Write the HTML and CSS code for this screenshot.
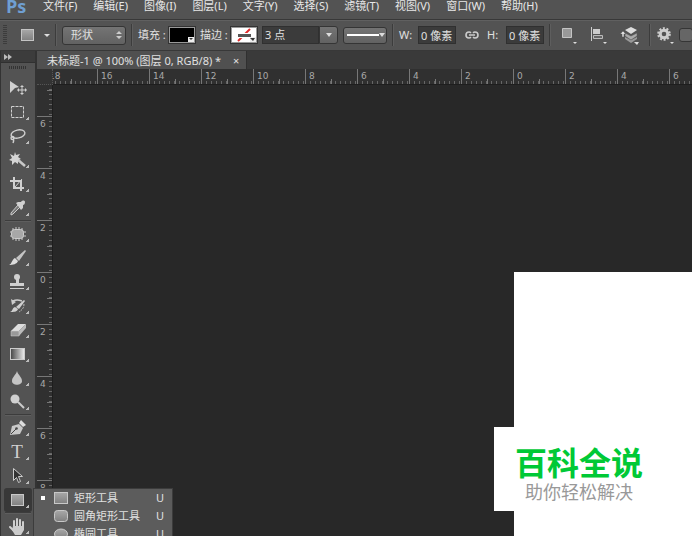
FILE: index.html
```html
<!DOCTYPE html>
<html lang="zh-CN">
<head>
    <meta charset="UTF-8">
    <meta name="viewport" content="width=device-width, initial-scale=1.0">
    <title>未标题-1</title>
    <link rel="stylesheet" href="styles.css">
</head>
<body>

<header class="menubar">
    <span class="logo">Ps</span>
    <nav>
        <a href="#">文件(F)</a>
        <a href="#">编辑(E)</a>
        <a href="#">图像(I)</a>
        <a href="#">图层(L)</a>
        <a href="#">文字(Y)</a>
        <a href="#">选择(S)</a>
        <a href="#">滤镜(T)</a>
        <a href="#">视图(V)</a>
        <a href="#">窗口(W)</a>
        <a href="#">帮助(H)</a>
    </nav>
</header>

<div class="options">
    <span class="grip"></span>
    <button class="preset" aria-label="工具预设">
        <svg width="30" height="16" viewBox="0 0 30 16">
            <rect x="1.500" y="2.500" width="12" height="11" fill="url(#metal)" stroke="#c4c4c4"/>
            <path d="M24 7h6l-3 3z" fill="#ddd"/>
        </svg>
    </button>
    <span class="divider"></span>
    <div class="mode">
        <select aria-label="模式"><option>形状</option></select>
        <svg width="6" height="10" viewBox="0 0 6 10"><path d="M0 4l3-3 3 3zM0 6l3 3 3-3z" fill="#ccc"/></svg>
    </div>
    <span class="divider"></span>
    <label for="fill">填充 :</label>
    <button id="fill" class="swatch black">
        <svg width="24" height="14" viewBox="0 0 24 14"><path d="M18 9h6v5h-6z" fill="#eee"/><path d="M19 10h4l-2 2z" fill="#333"/></svg>
    </button>
    <label for="stroke">描边 :</label>
    <button id="stroke" class="swatch white">
        <svg width="24" height="14" viewBox="0 0 24 14">
            <path d="M6 13L18 1" stroke="#e22b2b" stroke-width="2"/>
            <path d="M4 5h16v5H4z" fill="#fff"/>
            <path d="M6 6h13v3H6z" fill="#555"/>
            <path d="M18 9h6v5h-6z" fill="#eee"/><path d="M18 10h5l-2 3z" fill="#333"/>
        </svg>
    </button>
    <div class="combo">
        <input type="text" value="3 点" aria-label="描边宽度">
        <button aria-label="选择描边宽度"><svg width="6" height="4" viewBox="0 0 6 4"><path d="M0 0h6l-3 4z" fill="#ddd"/></svg></button>
    </div>
    <button class="line-style" aria-label="描边类型">
        <svg width="40" height="8" viewBox="0 0 40 8"><path d="M2 3h32v2H2z" fill="#fff"/><path d="M34 2h6l-3 4z" fill="#ddd"/></svg>
    </button>
    <span class="divider"></span>
    <label class="dim" for="width">W:</label>
    <input class="size" id="width" type="text" value="0 像素">
    <button class="link" aria-label="链接宽高">
        <svg width="14" height="8" viewBox="0 0 14 8" fill="none" stroke="#ccc" stroke-width="1.600">
            <path d="M6 1.800A3 3 0 0 0 4 1C2.300 1 1 2.300 1 4s1.300 3 3 3a3 3 0 0 0 2-.8M8 1.800A3 3 0 0 1 10 1c1.700 0 3 1.300 3 3s-1.300 3-3 3a3 3 0 0 1-2-.8M4 4h6"/>
        </svg>
    </button>
    <label class="dim" for="height">H:</label>
    <input class="size" id="height" type="text" value="0 像素">
    <span class="divider"></span>
    <div class="actions">
        <button aria-label="路径操作">
            <svg width="18" height="20" viewBox="0 0 18 20"><path d="M3.500 3.500h9v9h-9z" fill="#999" stroke="#c4c4c4"/><path d="M14 17h4l-2 2z" fill="#ddd"/></svg>
        </button>
        <button aria-label="路径对齐">
            <svg width="18" height="20" viewBox="0 0 18 20"><path d="M2.500 2v14" stroke="#ccc"/><path d="M4 4h7v5H4z" fill="#ccc"/><path d="M4.500 10.500h9v3h-9z" fill="#666" stroke="#bbb"/><path d="M14 17h4l-2 2z" fill="#ddd"/></svg>
        </button>
        <button aria-label="路径排列">
            <svg width="20" height="20" viewBox="0 0 20 20">
                <path d="M6 12l6 3 6-3v2l-6 4-6-4z" fill="#999"/>
                <path d="M6 8l6 3 6-3v3l-6 4-6-4z" fill="#aaa" stroke="#555" stroke-width=".5"/>
                <path d="M6 5l6-3 6 3-6 4z" fill="#ddd"/>
                <path d="M1 9l3-3 3 3H5v3H3V9z" fill="#ddd" stroke="#4c4c4c" stroke-width=".5"/>
                <path d="M15 17h5l-2 3z" fill="#ddd"/>
            </svg>
        </button>
    </div>
    <span class="divider"></span>
    <button class="gear" aria-label="设置">
        <svg width="18" height="20" viewBox="0 0 18 20">
            <circle cx="8" cy="9" r="5.800" fill="none" stroke="#ccc" stroke-width="2" stroke-dasharray="2 1.640"/>
            <circle cx="8" cy="9" r="3.800" fill="none" stroke="#ccc" stroke-width="3"/>
            <path d="M14 17h4l-2 2z" fill="#ddd"/>
        </svg>
    </button>
    <input class="align-edges" type="checkbox" aria-label="对齐边缘">
</div>

<main>
    <aside class="toolbox">
        <button class="collapse" aria-label="展开面板"><svg width="8" height="6" viewBox="0 0 8 6"><path d="M0 0l4 3-4 3zM4 0l4 3-4 3z" fill="#bbb"/></svg></button>
        <span class="handle"></span>
        <button class="tool" aria-label="移动工具">
            <svg viewBox="0 0 28 24"><path d="M6 5l9 6-4 1-5 5z" fill="#d0d0d0"/><path d="M18 10v8M14 14h8" stroke="#d0d0d0"/><path d="M16 11l2-2 2 2zM16 17l2 2 2-2zM15 12l-2 2 2 2zM21 12l2 2-2 2z" fill="#d0d0d0"/></svg>
        </button>
        <button class="tool more" aria-label="矩形选框工具">
            <svg viewBox="0 0 28 24"><path d="M7.500 6.500h12v11h-12z" fill="none" stroke="#d0d0d0" stroke-dasharray="3 1"/></svg>
        </button>
        <button class="tool more" aria-label="套索工具">
            <svg viewBox="0 0 28 24" fill="none" stroke="#d0d0d0" stroke-width="1.400"><ellipse cx="14" cy="10" rx="7" ry="4" transform="rotate(-12 14 10)"/><circle cx="8.500" cy="14" r="1.500"/><path d="M9 15c1 1 1 2 0 4"/></svg>
        </button>
        <button class="tool more" aria-label="魔棒工具">
            <svg viewBox="0 0 28 24"><path d="M13 11l8 7" stroke="#c8c8c8" stroke-width="2.500"/><path d="M11 4l1 3 4-1-2 3 3 2-3 1 0 4-3-2-3 3 0-4-3-1 3-2-2-4 4 2z" fill="#d4d4d4"/></svg>
        </button>
        <button class="tool more" aria-label="裁剪工具">
            <svg viewBox="0 0 28 24" fill="none" stroke="#d0d0d0" stroke-width="2"><path d="M10 5v11h10M6 9h11v10"/><path d="M11 15l7-8" stroke-width="1"/></svg>
        </button>
        <button class="tool more" aria-label="吸管工具">
            <svg viewBox="0 0 28 24"><path d="M14 9l2 2-7 7-2 1 0-2z" fill="#777" stroke="#ccc"/><path d="M12 7l2-1 3 0c1-2 4-2 4 0 0 2-1 3-2 3l0 3-2 2z" fill="#d0d0d0"/></svg>
        </button>
        <span class="rule"></span>
        <button class="tool more" aria-label="修补工具">
            <svg viewBox="0 0 28 24"><path d="M9 6v12M12 5v14M15 5v14M18 6v12M6 10h16M6 14h16" stroke="#ccc"/><rect x="7.500" y="7.500" width="12" height="9" rx="3" fill="#a8a8a8" stroke="#ccc"/></svg>
        </button>
        <button class="tool more" aria-label="画笔工具">
            <svg viewBox="0 0 28 24"><path d="M21 4l1 1-7 10-3-3z" fill="#c4c4c4"/><path d="M11 12l3 3c-1 3-5 4-9 4 3-1 3-6 6-7z" fill="#ddd"/></svg>
        </button>
        <button class="tool more" aria-label="仿制图章工具">
            <svg viewBox="0 0 28 24"><circle cx="13" cy="7" r="3" fill="#d0d0d0"/><path d="M12 9h3v4h5v3H6v-3h6zM6 18h14v1H6z" fill="#d0d0d0"/></svg>
        </button>
        <button class="tool more" aria-label="历史记录画笔工具">
            <svg viewBox="0 0 28 24"><path d="M20 6l1 1-6 8-3-2zM11 13l3 2c-1 3-4 3-8 3 3-1 2-4 5-5z" fill="#d0d0d0"/><path d="M9 7c4-2 6-1 9 0" fill="none" stroke="#ccc" stroke-width="1.500"/><path d="M7 5l1 6 4-3z" fill="#ccc"/><path d="M20 10c0 4-2 6-5 8" fill="none" stroke="#bbb" stroke-dasharray="2 1"/></svg>
        </button>
        <button class="tool more" aria-label="橡皮擦工具">
            <svg viewBox="0 0 28 24"><path d="M14 6h8l-7 7H7z" fill="#ddd"/><path d="M7 13h8v5H7z" fill="#999" stroke="#ccc" stroke-width=".5"/><path d="M15 13l7-7v4l-7 8z" fill="#bbb"/></svg>
        </button>
        <button class="tool more" aria-label="渐变工具">
            <svg viewBox="0 0 28 24"><rect x="6.500" y="6.500" width="14" height="11" fill="url(#fade)" stroke="#ccc"/></svg>
        </button>
        <button class="tool more" aria-label="模糊工具">
            <svg viewBox="0 0 28 24"><path d="M13 5c1 4 5 6 5 10 0 5-10 5-10 0 0-4 4-6 5-10z" fill="#c4c4c4"/></svg>
        </button>
        <button class="tool more" aria-label="减淡工具">
            <svg viewBox="0 0 28 24"><circle cx="11" cy="9" r="4.500" fill="#d0d0d0"/><path d="M14 12l6 6" stroke="#ccc" stroke-width="2"/></svg>
        </button>
        <span class="rule"></span>
        <button class="tool more" aria-label="钢笔工具">
            <svg viewBox="0 0 28 24"><path d="M6 19l2-9 7-2 4 4-3 6z" fill="#c8c8c8"/><path d="M15 7l2-3 5 5-3 2z" fill="#ddd"/><path d="M7 18l5-5" stroke="#444"/><circle cx="12.500" cy="12.500" r="1.300" fill="#444"/></svg>
        </button>
        <button class="tool more type" aria-label="文字工具">T</button>
        <button class="tool more" aria-label="路径选择工具">
            <svg viewBox="0 0 28 24"><path d="M9.500 4.500v12l3-3 2 5 2-1-2-5h4z" fill="#333" stroke="#ccc"/></svg>
        </button>
        <button class="tool more active" aria-label="矩形工具">
            <svg viewBox="0 0 28 24"><rect x="7.500" y="6.500" width="12" height="11" fill="url(#metal)" stroke="#c8c8c8"/></svg>
        </button>
        <span class="rule"></span>
        <button class="tool more" aria-label="抓手工具">
            <svg viewBox="0 0 28 24"><path d="M10 14V7M13 13V5M16 13V6M19 14V8M10 17l-4-4" stroke="#d0d0d0" stroke-width="2" stroke-linecap="round"/><path d="M9 12h11v4l-3 5h-6l-3-5z" fill="#ccc"/></svg>
        </button>
    </aside>

    <section class="document">
        <div class="tabs">
            <div class="tab"><span>未标题-1 @ 100% (图层 0, RGB/8) *</span><button aria-label="关闭">×</button></div>
        </div>
        <div class="ruler-corner"></div>
        <div class="ruler top">
            <span>18</span><span>16</span><span>14</span><span>12</span><span>10</span><span>8</span><span>6</span><span>4</span><span>2</span><span>0</span><span>2</span><span>4</span><span>6</span>
        </div>
        <div class="ruler side">
            <span>8</span><span>6</span><span>4</span><span>2</span><span>0</span><span>2</span><span>4</span><span>6</span><span>8</span>
        </div>
        <div class="canvas">
            <div class="page"></div>
            <div class="watermark">
                <strong>百科全说</strong>
                <span>助你轻松解决</span>
            </div>
        </div>
    </section>

    <div class="flyout">
        <button class="current">
            <svg width="14" height="12" viewBox="0 0 14 12"><rect x=".5" y=".5" width="13" height="11" fill="url(#metal)" stroke="#c8c8c8"/></svg>
            <span>矩形工具</span><kbd>U</kbd>
        </button>
        <button>
            <svg width="14" height="12" viewBox="0 0 14 12"><rect x=".5" y=".5" width="13" height="11" rx="3" fill="url(#metal)" stroke="#c8c8c8"/></svg>
            <span>圆角矩形工具</span><kbd>U</kbd>
        </button>
        <button>
            <svg width="14" height="12" viewBox="0 0 14 12"><ellipse cx="7" cy="6" rx="6.500" ry="5" fill="url(#metal)" stroke="#c8c8c8"/></svg>
            <span>椭圆工具</span><kbd>U</kbd>
        </button>
    </div>
</main>

<!-- shared gradients for the icons -->
<svg class="defs" width="0" height="0">
    <linearGradient id="metal" x2="0" y2="1"><stop stop-color="#a8a8a8"/><stop offset="1" stop-color="#808080"/></linearGradient>
    <linearGradient id="fade"><stop stop-color="#444"/><stop offset="1" stop-color="#eee"/></linearGradient>
</svg>

</body>
</html>
```
FILE: styles.css
```css
* {
    box-sizing: border-box;
}

body {
    display: flex;
    flex-direction: column;
    height: 100vh;
    margin: 0;
    overflow: hidden;
    background-color: #282828;
    color: #e0e0e0;
    font: 11px/14px "Noto Sans", "Noto Sans CJK SC", sans-serif;
}

button, input, select {
    margin: 0;
    padding: 0;
    border: none;
    background: none;
    color: inherit;
    font: inherit;
}

button {
    display: flex;
    align-items: center;
    justify-content: center;
}

svg {
    display: block;
    flex: none;
}

.defs {
    position: absolute;
}

/* menu bar */
.menubar {
    display: flex;
    align-items: flex-end;
    flex: none;
    height: 19px;
    padding: 0 6px 6px;
    background-color: #535353;
}

.logo {
    width: 37px;
    color: #6f9fd2;
    font: bold 18px/14px "Open Sans", sans-serif;
}

.menubar nav {
    display: flex;
    gap: 16px;
    white-space: nowrap;
}

.menubar a {
    color: #e8e8e8;
    text-decoration: none;
}

/* options bar */
.options {
    display: flex;
    align-items: center;
    gap: 5px;
    flex: none;
    height: 32px;
    padding-left: 3px;
    overflow: hidden;
    border-top: 1px solid #383838;
    border-bottom: 1px solid #383838;
    background-color: #535353;
    box-shadow: inset 0 1px #606060;
    white-space: nowrap;
}

.options > * {
    flex: none;
}

.grip {
    width: 4px;
    height: 20px;
    background: repeating-linear-gradient(#3c3c3c 0 1px, #535353 1px 2px);
}

.preset {
    justify-content: flex-end;
    width: 38px;
}

.divider {
    width: 2px;
    height: 22px;
    border-left: 1px solid #3c3c3c;
    border-right: 1px solid #5e5e5e;
}

.mode {
    display: grid;
    align-items: center;
    width: 64px;
}

.mode > * {
    grid-area: 1 / 1;
}

.mode svg {
    justify-self: end;
    margin-right: 4px;
    pointer-events: none;
}

.mode select {
    width: 100%;
    height: 19px;
    padding-left: 8px;
    appearance: none;
}

.mode select, .line-style, .combo button {
    border: 1px solid #353535;
    border-radius: 3px;
    background: linear-gradient(#747474, #626262);
}

.options label {
    width: 26px;
}

.swatch {
    width: 26px;
    height: 16px;
    border: 1px solid #999;
    outline: 1px solid #333;
}

.black {
    background-color: #000;
}

.white {
    background-color: #fff;
}

.combo {
    display: flex;
    width: 76px;
    height: 18px;
}

.combo input, .size {
    border: 1px solid #303030;
    background-color: #3b3b3b;
}

.combo input {
    flex: 1;
    min-width: 0;
    padding-left: 2px;
}

.combo button {
    width: 19px;
    border-radius: 0 3px 3px 0;
}

.line-style {
    width: 44px;
    height: 17px;
}

.options .dim {
    width: 14px;
}

.size {
    width: 38px;
    height: 18px;
    padding-left: 2px;
}

.link {
    width: 21px;
}

.actions {
    display: flex;
    gap: 12px;
    width: 88px;
    padding-left: 3px;
}

.gear {
    width: 18px;
}

.align-edges {
    width: 14px;
    height: 14px;
    appearance: none;
    border: 1px solid #353535;
    border-radius: 3px;
    background-color: #666;
}

/* work area */
main {
    display: flex;
    flex: 1;
    min-height: 0;
    position: relative;
}

.toolbox {
    display: flex;
    flex-direction: column;
    align-items: center;
    flex: none;
    width: 37px;
    border: solid #333;
    border-width: 0 2px 0 1px;
    overflow: hidden;
    background-color: #535353;
}

.toolbox > * {
    flex: none;
}

.collapse {
    width: 100%;
    height: 12px;
    padding-left: 3px;
    justify-content: flex-start;
    border-bottom: 1px solid #303030;
    background-color: #3c3c3c;
}

.handle {
    width: 18px;
    height: 3px;
    margin: 3px 0 7px;
    background: repeating-linear-gradient(90deg, #333 0 1px, #535353 1px 2px);
}

.tool {
    position: relative;
    width: 28px;
    height: 24px;
}

.tool svg {
    width: 28px;
    height: 24px;
}

.more::after {
    content: "";
    position: absolute;
    right: 3px;
    bottom: 4px;
    width: 3px;
    height: 3px;
    background: linear-gradient(135deg, transparent 40%, #bbb 40%);
}

.type {
    padding-right: 2px;
    color: #d0d0d0;
    font: 19px/24px "Liberation Serif", serif;
}

.active {
    border-radius: 3px;
    background-color: #383838;
}

.rule {
    width: 26px;
    height: 2px;
    border-top: 1px solid #3c3c3c;
    border-bottom: 1px solid #5e5e5e;
}

/* document window */
.document {
    display: grid;
    grid-template: 18px 16px 1fr / 16px 1fr;
    flex: 1;
    min-width: 0;
}

.tabs {
    grid-column: 1 / 3;
    display: flex;
    background-color: #3a3a3a;
}

.tab {
    display: flex;
    align-items: center;
    gap: 10px;
    padding: 2px 5px 0 10px;
    border-right: 1px solid #303030;
    background-color: #505050;
    white-space: nowrap;
}

.tab button {
    width: 10px;
}

.ruler-corner {
    border: dotted #555;
    border-width: 0 1px 1px 0;
    background-color: #333;
}

.ruler {
    display: flex;
    min-width: 0;
    min-height: 0;
    overflow: hidden;
    background-color: #303030;
    color: #a8a8a8;
    font: 9px/10px "DejaVu Sans", sans-serif;
}

.ruler span {
    flex: none;
}

/* short ticks, half ticks, then the full tick of each 52px step */
.top {
    border-bottom: 1px solid #1e1e1e;
}

.top span {
    width: 52px;
    height: 15px;
    padding: 2px 0 0 3px;
    border-left: 1px solid #777;
    background:
        linear-gradient(90deg, #777 1px, transparent 1px) 25px 100% / 26px 5px repeat-x,
        linear-gradient(90deg, #666 1px, transparent 1px) 4px 100% / 5px 3px repeat-x;
}

.top span:first-child {
    margin-left: -8px;
}

.side {
    flex-direction: column;
    border-right: 1px solid #1e1e1e;
}

.side span {
    width: 15px;
    height: 52px;
    padding: 2px 0 0 3px;
    border-top: 1px solid #777;
    background:
        linear-gradient(#777 1px, transparent 1px) 100% 25px / 5px 26px repeat-y,
        linear-gradient(#666 1px, transparent 1px) 100% 4px / 3px 5px repeat-y;
}

.side span:first-child {
    margin-top: -21px;
}

.canvas {
    position: relative;
    overflow: hidden;
    background-color: #282828;
}

.page {
    position: absolute;
    top: 187px;
    right: 0;
    bottom: 0;
    left: 461px;
    background-color: #fff;
}

.watermark {
    position: absolute;
    top: 342px;
    left: 441px;
    display: flex;
    flex-direction: column;
    align-items: center;
    width: 170px;
    height: 84px;
    padding-top: 16px;
    background-color: #fff;
    color: #999;
    font: 18px/24px "Noto Sans CJK SC", sans-serif;
}

.watermark strong {
    color: #00c936;
    font-size: 32px;
    line-height: 36px;
}

/* shape tool menu */
.flyout {
    position: absolute;
    top: 437px;
    left: 33px;
    width: 140px;
    padding-bottom: 2px;
    border: 1px solid #3c3c3c;
    background-color: #5c5c5c;
}

.flyout button {
    gap: 6px;
    width: 100%;
    height: 18px;
    padding: 0 8px 0 20px;
    text-align: left;
}

.flyout .current {
    padding-left: 7px;
}

.current::before {
    content: "";
    width: 4px;
    height: 4px;
    margin-right: 3px;
    background-color: #fff;
}

.flyout span {
    flex: 1;
}

.flyout kbd {
    font: inherit;
}
```
